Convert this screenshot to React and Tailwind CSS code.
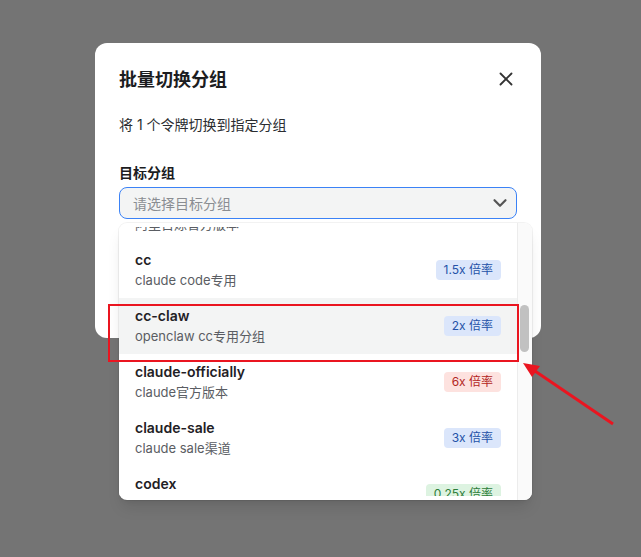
import React from 'react';
import { X, ChevronDown } from 'lucide-react';

const groups = [
  { name: '阿里百炼', desc: '阿里百炼官方版本', ratio: '1x 倍率', tone: 'blue' },
  { name: 'cc', desc: 'claude code专用', ratio: '1.5x 倍率', tone: 'blue' },
  { name: 'cc-claw', desc: 'openclaw cc专用分组', ratio: '2x 倍率', tone: 'blue', active: true },
  { name: 'claude-officially', desc: 'claude官方版本', ratio: '6x 倍率', tone: 'red' },
  { name: 'claude-sale', desc: 'claude sale渠道', ratio: '3x 倍率', tone: 'blue' },
  { name: 'codex', desc: 'openai codex专用', ratio: '0.25x 倍率', tone: 'green' },
];

const toneClass = {
  blue: 'bg-[#dbe6fb] text-[#2452a8]',
  red: 'bg-[#fde2df] text-[#b3261e]',
  green: 'bg-[#ddf3e1] text-[#2e7d3a]',
};

const font = { fontFamily: 'Inter, "Noto Sans CJK SC", sans-serif' };

const GroupOption = ({ group }) => (
  <div className={`h-[56px] flex items-center justify-between px-4 ${group.active ? 'bg-[#f3f4f4]' : 'bg-white'}`}>
    <div className="flex flex-col">
      <span className="text-[14px] leading-5 font-semibold text-[#1f2125]">{group.name}</span>
      <span className="text-[13px] leading-5 text-[#5a5d63]">{group.desc}</span>
    </div>
    <span className={`h-5 px-2 rounded flex items-center text-[12px] ${toneClass[group.tone]}`}>{group.ratio}</span>
  </div>
);

const App = () => {
  return (
    <div className="relative w-full h-[557px] bg-[#747474] overflow-hidden pt-[43px] pl-[95px]" style={font}>
      <div className="w-[446px] bg-white rounded-xl px-6 pt-[22px]">
        <div className="flex items-center justify-between h-7">
          <h2 className="text-[18px] font-bold text-[#1c1d1f]">批量切换分组</h2>
          <button className="text-[#333]">
            <X size={22} strokeWidth={2} />
          </button>
        </div>
        <p className="mt-[22px] text-[14px] leading-5 text-[#2b2d31]">将 1 个令牌切换到指定分组</p>
        <div className="mt-[28px]">
          <label className="block text-[14px] leading-5 font-semibold text-[#1c1d1f]">目标分组</label>
          <div className="relative mt-1">
            <div className="h-8 rounded-lg border border-[#3b82f6] bg-[#f3f4f4] flex items-center justify-between pl-[13px] pr-[5px]">
              <span className="text-[14px] text-[#8a8d92]">请选择目标分组</span>
              <ChevronDown size={22} strokeWidth={2.4} className="text-[#555]" />
            </div>
            <div className="absolute left-0 top-[36px] w-[413px] h-[277px] bg-white rounded-lg shadow-lg ring-1 ring-black/5 flex overflow-hidden z-10">
              <div className="w-[398px] py-1">
                <div className="h-full overflow-hidden">
                  <div className="-mt-[41px]">
                    {groups.map((g) => (
                      <GroupOption key={g.name} group={g} />
                    ))}
                  </div>
                </div>
              </div>
              <div className="w-[15px] bg-[#fafafa] border-l border-[#ececec] pl-[2px]">
                <div className="mt-[82px] w-[9px] h-[47px] rounded-full bg-[#c1c1c1]" />
              </div>
            </div>
          </div>
        </div>
        <div className="h-[119px]" />
      </div>

      {/* annotation */}
      <div className="absolute left-[108px] top-[304px] w-[411px] h-[58px] border-2 border-[#ea1520] z-20" />
      <svg className="absolute left-0 top-0 z-20" width="641" height="557" viewBox="0 0 641 557">
        <line x1="613" y1="424" x2="532" y2="369" stroke="#ea1520" strokeWidth="3" />
        <polygon points="523,363 540,366 532,377" fill="#ea1520" />
      </svg>
    </div>
  );
};

export default App;
